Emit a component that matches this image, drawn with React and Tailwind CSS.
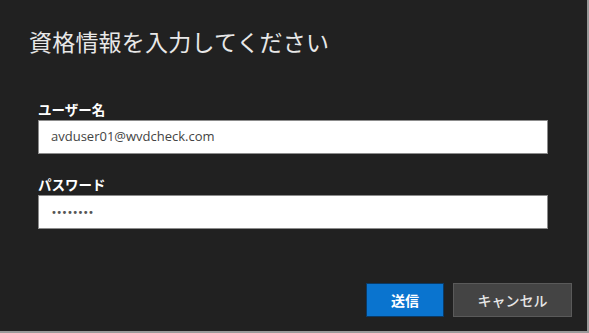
export default function App() {
  const jp = { fontFamily: '"Noto Sans CJK JP", "Noto Sans", sans-serif' };
  return (
    <div className="w-[589px] h-[333px] bg-[#212121] border-r-2 border-b-2 border-[#9a9a9a] flex flex-col" style={jp}>
      <h1 className="ml-[29px] mt-[26px] text-[23px] leading-[30px] text-[#e8e8e8] font-normal tracking-[0.2px]">
        資格情報を入力してください
      </h1>
      <div className="ml-[38px] mt-[44px] w-[510px] flex flex-col">
        <label className="text-[13.5px] leading-[18px] font-bold text-white">ユーザー名</label>
        <div className="mt-[2px] h-[34px] bg-white border border-[#8c8c8c] flex items-center pl-[12px]">
          <span className="text-[13px] text-[#444]" style={{ fontFamily: '"Open Sans", "Noto Sans", sans-serif' }}>
            avduser01@wvdcheck.com
          </span>
        </div>
        <label className="mt-[21px] text-[13.5px] leading-[18px] font-bold text-white">パスワード</label>
        <div className="mt-[2px] h-[34px] bg-white border border-[#8c8c8c] flex items-center pl-[12px]">
          <span className="text-[10px] text-[#555] tracking-[-0.6px]" style={{ fontFamily: '"DejaVu Sans", sans-serif' }}>
            ••••••••
          </span>
        </div>
      </div>
      <div className="mt-[54px] mr-[15px] flex justify-end gap-[9px]">
        <button className="w-[78px] h-[34px] bg-[#0a74cf] border border-[#0a3a66] text-white text-[14px] font-bold flex items-center justify-center">
          送信
        </button>
        <button className="w-[119px] h-[34px] bg-[#444444] border border-[#5a5a5a] text-[#e6e6e6] text-[14px] font-medium flex items-center justify-center">
          キャンセル
        </button>
      </div>
    </div>
  );
}
